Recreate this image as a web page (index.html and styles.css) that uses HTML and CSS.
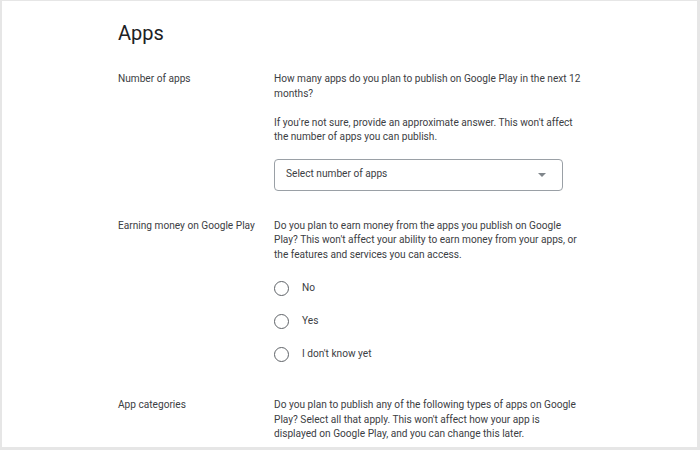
FILE: index.html
```html
<!DOCTYPE html>
<html>
<head>
<meta charset="utf-8">
<link rel="stylesheet" href="styles.css">
</head>
<body>
<div class="card">
  <h1 class="title">Apps</h1>
  <div class="row row-first">
    <div class="label">Number of apps</div>
    <div class="content">
      <p class="para">How many apps do you plan to publish on Google Play in the next 12 months?</p>
      <p class="para para-gap">If you're not sure, provide an approximate answer. This won't affect the number of apps you can publish.</p>
      <div class="select">
        <span class="select-text">Select number of apps</span>
        <span class="arrow"></span>
      </div>
    </div>
  </div>
  <div class="row row-second">
    <div class="label">Earning money on Google Play</div>
    <div class="content">
      <p class="para">Do you plan to earn money from the apps you publish on Google Play? This won't affect your ability to earn money from your apps, or the features and services you can access.</p>
      <div class="radios">
        <div class="radio-row"><span class="radio"></span><span class="radio-label">No</span></div>
        <div class="radio-row"><span class="radio"></span><span class="radio-label">Yes</span></div>
        <div class="radio-row"><span class="radio"></span><span class="radio-label">I don't know yet</span></div>
      </div>
    </div>
  </div>
  <div class="row row-third">
    <div class="label">App categories</div>
    <div class="content">
      <p class="para">Do you plan to publish any of the following types of apps on Google Play? Select all that apply. This won't affect how your app is displayed on Google Play, and you can change this later.</p>
    </div>
  </div>
</div>
</body>
</html>
```

FILE: styles.css
```css
html, body {
  margin: 0;
  padding: 0;
  height: 100%;
  overflow: hidden;
}
body {
  background: #e6e6e6;
  padding: 1px 3px 3px 2px;
  box-sizing: border-box;
  font-family: Roboto, "Liberation Sans", Arial, sans-serif;
  color: #3c4043;
}
.card {
  background: #ffffff;
  height: 100%;
  box-sizing: border-box;
  padding: 18px 0 0 116px;
  overflow: hidden;
}
.title {
  margin: 0;
  font-size: 20px;
  font-weight: 400;
  line-height: 28px;
  color: #202124;
}
.row {
  display: flex;
}
.row-first { margin-top: 25px; }
.row-second { margin-top: 28px; }
.row-third { margin-top: 27px; }
.label {
  width: 156px;
  flex: none;
  font-size: 10.15px;
  line-height: 14.5px;
  color: #3c4043;
}
.content {
  width: 310px;
  flex: none;
  font-size: 10.15px;
  line-height: 14.5px;
}
.para {
  margin: 0;
}
.para-gap {
  margin-top: 14.5px;
}
.select {
  margin-top: 14px;
  width: 289px;
  height: 32px;
  box-sizing: border-box;
  border: 1px solid #9aa0a6;
  border-radius: 4px;
  display: flex;
  align-items: center;
  justify-content: space-between;
  padding: 0 16px 0 11px;
}
.select-text {
  color: #3c4043;
}
.arrow {
  width: 0;
  height: 0;
  border-left: 4px solid transparent;
  border-right: 4px solid transparent;
  border-top: 4px solid #80868b;
}
.radios {
  margin-top: 10px;
}
.radio-row {
  height: 33px;
  display: flex;
  align-items: center;
}
.radio {
  width: 15px;
  height: 15px;
  box-sizing: border-box;
  border: 1.5px solid #5f6368;
  border-radius: 50%;
  flex: none;
}
.radio-label {
  margin-left: 13px;
}
```
